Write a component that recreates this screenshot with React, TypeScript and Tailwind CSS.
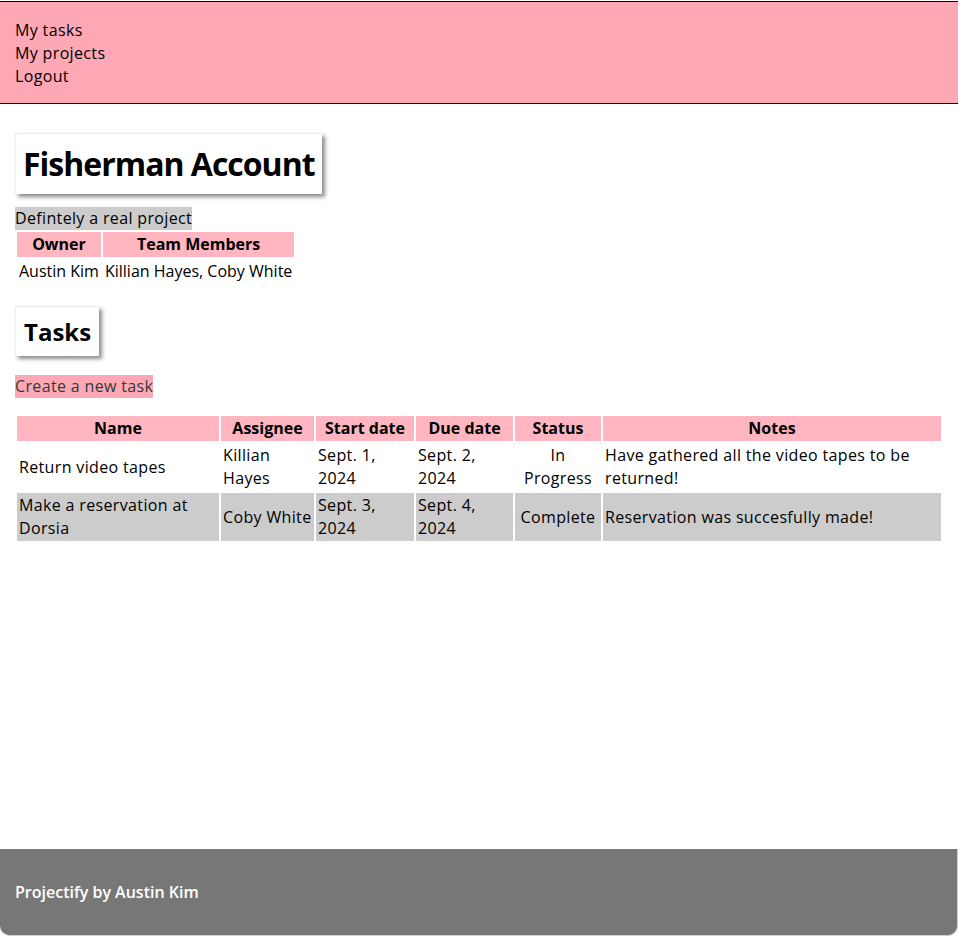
import React from "react";

const font = { fontFamily: '"Comic Sans MS", "Open Sans", "DejaVu Sans", sans-serif' };

const tasks = [
  {
    name: "Return video tapes",
    assignee: "Killian Hayes",
    start: "Sept. 1, 2024",
    due: "Sept. 2, 2024",
    status: "In Progress",
    notes: "Have gathered all the video tapes to be returned!",
  },
  {
    name: "Make a reservation at Dorsia",
    assignee: "Coby White",
    start: "Sept. 3, 2024",
    due: "Sept. 4, 2024",
    status: "Complete",
    notes: "Reservation was succesfully made!",
  },
];

export default function App() {
  return (
    <div
      className="mr-px flex min-h-[936px] flex-col bg-white text-[16px] leading-[23px] tracking-[0.35px] text-black"
      style={font}
    >
      <header className="mt-px border-y border-black bg-[#ffa8b5] px-[15px] pt-[17px] pb-[15px]">
        <ul className="flex flex-col">
          <li>My tasks</li>
          <li>My projects</li>
          <li>Logout</li>
        </ul>
      </header>

      <main className="flex-1 px-[15px] pt-[29px]">
        <h1 className="inline-block h-[61px] border-t border-l border-[#eeeeee] bg-white px-[7px] text-[32px] font-bold leading-[60px] tracking-[-1px] shadow-[3px_3px_4px_rgba(0,0,0,0.45)]">
          Fisherman Account
        </h1>
        <div className="mt-[13px]">
          <span className="inline-block bg-[#cccccc]">Defintely a real project</span>
        </div>
        <table className="border-separate border-spacing-[2px] tracking-normal">
          <thead>
            <tr>
              <th className="bg-[#ffb6c1] px-[2px] py-px font-bold">Owner</th>
              <th className="bg-[#ffb6c1] px-[2px] py-px font-bold">Team Members</th>
            </tr>
          </thead>
          <tbody>
            <tr>
              <td className="px-[2px] py-px">Austin Kim</td>
              <td className="px-[2px] py-px">Killian Hayes, Coby White</td>
            </tr>
          </tbody>
        </table>

        <div className="mt-[20px]">
          <h2 className="inline-flex h-[50px] items-center border-t border-l border-[#eeeeee] bg-white px-[8px] text-[24px] font-bold leading-[30px] tracking-normal shadow-[3px_3px_4px_rgba(0,0,0,0.45)]">
            Tasks
          </h2>
        </div>
        <div className="mt-[19px]">
          <a className="inline-block bg-[#ffa8b5] text-[#2f3b3b]">Create a new task</a>
        </div>

        <table className="mt-[16px] w-full table-fixed border-separate border-spacing-[2px]">
          <colgroup>
            <col className="w-[202px]" />
            <col className="w-[93px]" />
            <col className="w-[98px]" />
            <col className="w-[97px]" />
            <col className="w-[86px]" />
            <col />
          </colgroup>
          <thead>
            <tr>
              {["Name", "Assignee", "Start date", "Due date", "Status", "Notes"].map((h) => (
                <th key={h} className="bg-[#ffb6c1] px-px py-px text-center font-bold tracking-normal">
                  {h}
                </th>
              ))}
            </tr>
          </thead>
          <tbody>
            {tasks.map((t, i) => {
              const bg = i % 2 === 1 ? "bg-[#cccccc]" : "bg-white";
              return (
                <tr key={t.name}>
                  <td className={`${bg} px-[2px] py-px text-left align-middle`}>{t.name}</td>
                  <td className={`${bg} px-[2px] py-px text-left align-middle`}>{t.assignee}</td>
                  <td className={`${bg} px-[2px] py-px text-left align-middle`}>{t.start}</td>
                  <td className={`${bg} px-[2px] py-px text-left align-middle`}>{t.due}</td>
                  <td className={`${bg} px-[2px] py-px text-center align-middle`}>{t.status}</td>
                  <td className={`${bg} px-[2px] py-px text-left align-middle`}>{t.notes}</td>
                </tr>
              );
            })}
          </tbody>
        </table>
      </main>

      <footer className="flex h-[87px] items-center rounded-b-[10px] border-r border-b border-[#cfcfcf] bg-[#777777] px-[15px] text-[16px] font-semibold tracking-normal text-white">
        Projectify by Austin Kim
      </footer>
    </div>
  );
}
